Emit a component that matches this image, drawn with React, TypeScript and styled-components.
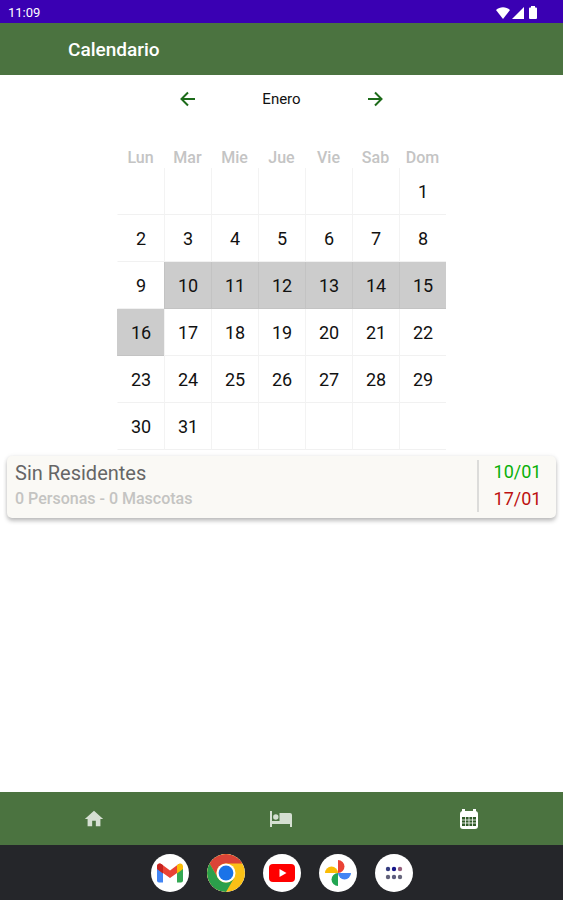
import React, { useState } from "react";
import styled, { createGlobalStyle } from "styled-components";

const GlobalStyle = createGlobalStyle`
  *, *::before, *::after { box-sizing: border-box; }
  body { margin: 0; background: #fff; font-family: Roboto, "Liberation Sans", sans-serif; color: #111; }
  button { font: inherit; color: inherit; background: none; border: 0; padding: 0; cursor: pointer; }
`;

const Screen = styled.div`
  display: flex;
  flex-direction: column;
  min-height: 100vh;
`;

const StatusBar = styled.div`
  display: flex;
  align-items: center;
  justify-content: space-between;
  height: 23px;
  padding: 2px 24px 0 8px;
  background: #3a00b3;
  color: #fff;
  font-size: 13px;
  line-height: 20px;
`;

const StatusIcons = styled.div`
  display: flex;
  align-items: center;
  gap: 2px;
`;

const AppBar = styled.header`
  display: flex;
  align-items: center;
  height: 52px;
  padding: 2px 68px 0;
  background: #4b7340;
  color: #fff;
`;

const Title = styled.h1`
  margin: 0;
  font-size: 19px;
  font-weight: 500;
  line-height: 24px;
`;

const Content = styled.main`
  flex: 1;
`;

const MonthNav = styled.div`
  display: grid;
  grid-template-columns: repeat(3, 1fr);
  align-items: center;
  justify-items: center;
  width: 50%;
  height: 47px;
  margin: 0 auto;
  font-size: 15px;
`;

const ArrowButton = styled.button`
  display: flex;
  color: #1d6b1a;
`;

const Calendar = styled.table`
  margin: 25px auto 0;
  border-spacing: 0;
  table-layout: fixed;
  width: 329px;
`;

const Weekday = styled.th`
  height: 21px;
  padding: 0;
  color: #c4c4c4;
  font-size: 16px;
  font-weight: 500;
  line-height: 20px;
`;

const DayCell = styled.td<{ $selected: boolean }>`
  height: 47px;
  padding: 0;
  border-bottom: 1px solid ${(p) => (p.$selected ? "#c3c3c3" : "#f1f1f1")};
  border-left: 1px solid ${(p) => (p.$selected ? "#c3c3c3" : "#f3f3f3")};
  background: ${(p) => (p.$selected ? "#cccccc" : "transparent")};
  &:first-child { border-left-color: transparent; }
`;

const DayButton = styled.button`
  display: block;
  width: 100%;
  height: 46px;
  font-size: 18px;
  font-weight: 400;
  text-align: center;
`;

const BookingCard = styled.article`
  display: flex;
  margin: 6px 7px 0;
  padding: 4px 0 6px 8px;
  border-radius: 5px;
  background: #faf9f5;
  box-shadow: 0 3px 4px rgba(0, 0, 0, 0.24), 0 0 4px rgba(0, 0, 0, 0.08);
`;

const Booking = styled.div`
  flex: 1;
`;

const BookingName = styled.h2`
  margin: 0;
  color: #666;
  font-size: 20px;
  font-weight: 400;
  line-height: 26px;
`;

const BookingDetail = styled.p`
  margin: 0;
  color: #c4c4c2;
  font-size: 16px;
  font-weight: 500;
  line-height: 26px;
`;

const Dates = styled.div`
  display: flex;
  flex-direction: column;
  gap: 3px;
  width: 79px;
  border-left: 2px solid #dcdcda;
  font-size: 18px;
  line-height: 24px;
  text-align: center;
`;

const BookingDate = styled.time<{ $kind: "start" | "end" }>`
  color: ${(p) => (p.$kind === "start" ? "#08b008" : "#bd1010")};
`;

const BottomNav = styled.nav`
  display: grid;
  grid-template-columns: repeat(3, 1fr);
  height: 53px;
  background: #4b7340;
`;

const NavButton = styled.button<{ $active?: boolean }>`
  display: flex;
  align-items: center;
  justify-content: center;
  color: ${(p) => (p.$active ? "#fff" : "#d5dfd2")};
`;

const Dock = styled.footer`
  display: flex;
  align-items: center;
  justify-content: center;
  gap: 18px;
  height: 55px;
  background: #25262a;
`;

const DockButton = styled.button`
  display: flex;
  align-items: center;
  justify-content: center;
  width: 38px;
  height: 38px;
  border-radius: 50%;
  background: #fff;
  overflow: hidden;
`;

const Arrow = ({ back = false }: { back?: boolean }) => (
  <svg width="18" height="18" viewBox="0 0 18 18" fill="none" stroke="currentColor" strokeWidth="2">
    {back ? <path d="M16 9H3M9 2.500 2.500 9 9 15.500" /> : <path d="M2 9h13M9 2.500 15.500 9 9 15.500" />}
  </svg>
);

const WifiIcon = () => (
  <svg width="14" height="12" viewBox="0 0 14 12" fill="#fff">
    <path d="M7 12 0 3C4-.7 10-.7 14 3Z" />
  </svg>
);

const SignalIcon = () => (
  <svg width="12" height="12" viewBox="0 0 12 12" fill="#fff">
    <path d="M12 0v12H0Z" />
  </svg>
);

const BatteryIcon = () => (
  <svg width="13" height="13" viewBox="0 0 13 13" fill="#fff">
    <path d="M5 1.500V0h4v1.500h1q1 0 1 1V12q0 1-1 1H4q-1 0-1-1V2.500q0-1 1-1Z" />
  </svg>
);

const HomeIcon = () => (
  <svg width="22" height="22" viewBox="0 0 24 24" fill="currentColor">
    <path d="M10 20v-6h4v6h5v-8h3L12 3 2 12h3v8z" />
  </svg>
);

const BedIcon = () => (
  <svg width="22" height="18" viewBox="0 0 22 18" fill="currentColor">
    <path d="M0 1h2v11h18v-2h2v7h-2v-3H2v3H0Z" />
    <path d="M9.500 3H20q2 0 2 2v8H9.500Z" />
    <circle cx="5.800" cy="7" r="2.700" />
    <path d="M2 11h8v2H2z" />
  </svg>
);

const CalendarIcon = () => (
  <svg width="20" height="22" viewBox="0 0 20 22">
    <path d="M3 1h3v3H3zM14 1h3v3h-3z" fill="currentColor" />
    <rect x="1" y="3" width="18" height="18" rx="3" fill="currentColor" />
    <rect x="3" y="9" width="14" height="9" fill="#315a29" />
    <path d="M3 12h14M3 15h14M6.500 9v9M10 9v9M13.500 9v9" stroke="#fff" strokeWidth="0.8" />
  </svg>
);

const GmailIcon = () => (
  <svg width="26" height="20" viewBox="0 0 26 20">
    <path d="M0 4v13.500Q0 19.500 2 19.500h4V8.500Z" fill="#4285f4" />
    <path d="M26 4v13.500q0 2-2 2h-4V8.500Z" fill="#34a853" />
    <path d="M0 3.500C0 .5 3-.5 5 1.500l8 6 8-6c.6-.5 1-.6 1.500-.8L20 10l-7 5-7-5-6-4.500Z" fill="#ea4335" />
    <path d="M0 3.500V6l6 4.500V2.300L5 1.500C3-.5 0 .5 0 3.500Z" fill="#c5221f" />
    <path d="M20 2.300V10.500L26 6V3.500C26 .5 23-.5 21 1.500Z" fill="#fbbc04" />
  </svg>
);

const ChromeIcon = () => (
  <svg width="38" height="38" viewBox="0 0 38 38">
    <circle cx="19" cy="19" r="19" fill="#fbc116" />
    <path d="M2.550 9.500A19 19 0 0 1 35.450 9.500H19A9.500 9.500 0 0 0 10.770 23.750Z" fill="#db4437" />
    <path d="M2.550 9.500A19 19 0 0 0 19 38L27.230 23.750A9.500 9.500 0 0 1 10.770 23.750Z" fill="#2b9f4b" />
    <circle cx="19" cy="19" r="9.500" fill="#fff" />
    <circle cx="19" cy="19" r="7.400" fill="#1a73e8" />
  </svg>
);

const YoutubeIcon = () => (
  <svg width="26" height="18" viewBox="0 0 26 18">
    <rect width="26" height="18" rx="4" fill="#f00" />
    <path d="m10.500 5 7 4-7 4Z" fill="#fff" />
  </svg>
);

const PhotosIcon = () => (
  <svg width="28" height="28" viewBox="0 0 28 28">
    <path d="M14 1a6.500 6.500 0 0 1 0 13Z" fill="#ea4335" />
    <path d="M27 14a6.500 6.500 0 0 1-13 0Z" fill="#4285f4" />
    <path d="M14 27a6.500 6.500 0 0 1 0-13Z" fill="#22a652" />
    <path d="M1 14a6.500 6.500 0 0 1 13 0Z" fill="#fbbc04" />
  </svg>
);

const AppsIcon = () => (
  <svg width="20" height="14" viewBox="0 0 20 14">
    <circle cx="4" cy="3" r="2.200" fill="#353d80" />
    <circle cx="10" cy="3" r="2.200" fill="#17178a" />
    <circle cx="16" cy="3" r="2.200" fill="#95607d" />
    <circle cx="4" cy="11" r="2.200" fill="#62627a" />
    <circle cx="10" cy="11" r="2.200" fill="#5c5c7d" />
    <circle cx="16" cy="11" r="2.200" fill="#66667c" />
  </svg>
);

const weekdays = ["Lun", "Mar", "Mie", "Jue", "Vie", "Sab", "Dom"];
const weeks = Array.from({ length: 6 }, (_, week) =>
  Array.from({ length: 7 }, (_, day) => {
    const date = week * 7 + day - 5;
    return date >= 1 && date <= 31 ? date : null;
  })
);

const tabs = [
  { label: "Inicio", Icon: HomeIcon },
  { label: "Habitaciones", Icon: BedIcon },
  { label: "Calendario", Icon: CalendarIcon },
];

const apps = [
  { label: "Gmail", Icon: GmailIcon },
  { label: "Chrome", Icon: ChromeIcon },
  { label: "YouTube", Icon: YoutubeIcon },
  { label: "Fotos", Icon: PhotosIcon },
  { label: "Aplicaciones", Icon: AppsIcon },
];

export default function App() {
  const [tab, setTab] = useState("Calendario");
  return (
    <Screen>
      <GlobalStyle />
      <StatusBar>
        <span>11:09</span>
        <StatusIcons>
          <WifiIcon />
          <SignalIcon />
          <BatteryIcon />
        </StatusIcons>
      </StatusBar>
      <AppBar>
        <Title>Calendario</Title>
      </AppBar>
      <Content>
        <MonthNav>
          <ArrowButton aria-label="Mes anterior"><Arrow back /></ArrowButton>
          <span>Enero</span>
          <ArrowButton aria-label="Mes siguiente"><Arrow /></ArrowButton>
        </MonthNav>
        <Calendar>
          <thead>
            <tr>{weekdays.map((name) => <Weekday key={name} scope="col">{name}</Weekday>)}</tr>
          </thead>
          <tbody>
            {weeks.map((week, row) => (
              <tr key={row}>
                {week.map((date, column) => (
                  <DayCell key={column} $selected={date !== null && date >= 10 && date <= 16}>
                    {date !== null && <DayButton>{date}</DayButton>}
                  </DayCell>
                ))}
              </tr>
            ))}
          </tbody>
        </Calendar>
        <BookingCard>
          <Booking>
            <BookingName>Sin Residentes</BookingName>
            <BookingDetail>0 Personas - 0 Mascotas</BookingDetail>
          </Booking>
          <Dates>
            <BookingDate $kind="start">10/01</BookingDate>
            <BookingDate $kind="end">17/01</BookingDate>
          </Dates>
        </BookingCard>
      </Content>
      <BottomNav>
        {tabs.map(({ label, Icon }) => (
          <NavButton key={label} aria-label={label} $active={tab === label} onClick={() => setTab(label)}>
            <Icon />
          </NavButton>
        ))}
      </BottomNav>
      <Dock>
        {apps.map(({ label, Icon }) => (
          <DockButton key={label} aria-label={label}><Icon /></DockButton>
        ))}
      </Dock>
    </Screen>
  );
}
